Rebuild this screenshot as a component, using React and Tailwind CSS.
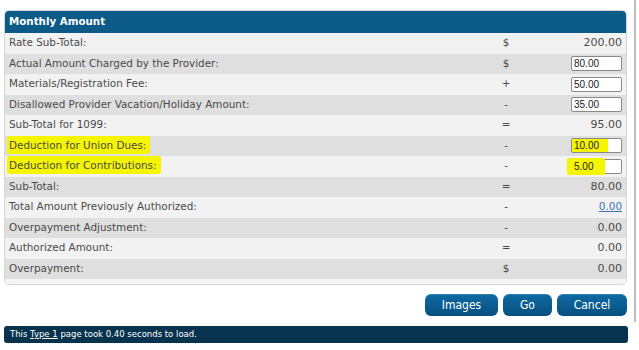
import React from "react";

const rows = [
  { label: "Rate Sub-Total:", sym: "$", val: "200.00" },
  { label: "Actual Amount Charged by the Provider:", sym: "$", input: "80.00" },
  { label: "Materials/Registration Fee:", sym: "+", input: "50.00" },
  { label: "Disallowed Provider Vacation/Holiday Amount:", sym: "-", input: "35.00" },
  { label: "Sub-Total for 1099:", sym: "=", val: "95.00" },
  { label: "Deduction for Union Dues:", sym: "-", input: "10.00", hl: 1 },
  { label: "Deduction for Contributions:", sym: "-", input: "5.00", hl: 2 },
  { label: "Sub-Total:", sym: "=", val: "80.00" },
  { label: "Total Amount Previously Authorized:", sym: "-", val: "0.00", link: true },
  { label: "Overpayment Adjustment:", sym: "-", val: "0.00" },
  { label: "Authorized Amount:", sym: "=", val: "0.00" },
  { label: "Overpayment:", sym: "$", val: "0.00" },
];

function Row({ r, i }) {
  const bg = i % 2 === 0 ? "bg-[#f2f2f2]" : "bg-[#dfdfdf]";
  return (
    <div className={`flex items-center h-[20.5px] ${bg}`}>
      <div className="flex-1 pl-[4px] relative">
        {r.hl ? (
          <span className="relative">
            <span className="absolute left-[-2px] top-[-3px] bottom-[-3px] right-[-4px] bg-[#f5f500] rounded-[2px]"></span>
            <span className="relative">{r.label}</span>
          </span>
        ) : (
          <span>{r.label}</span>
        )}
      </div>
      <div className="w-[40px] text-center mr-[40px]">{r.sym}</div>
      <div className="w-[60px] flex justify-end pr-[4px]">
        {r.input ? (
          <div className="relative w-[51px] h-[15px] border border-[#8a8a8a] rounded-[2px] bg-white flex items-center pl-[2px] text-[10px] text-[#222] font-['Liberation_Sans',sans-serif]">
            {r.hl === 1 && (
              <span className="absolute left-0 top-0 bottom-0 w-[36px] bg-[#f5f500]"></span>
            )}
            {r.hl === 2 && (
              <span className="absolute left-[-5px] top-[-2px] bottom-[-2px] w-[38px] bg-[#f5f500] rounded-[2px]"></span>
            )}
            <span className="relative">{r.input}</span>
          </div>
        ) : r.link ? (
          <span className="text-[#3a74b8] underline">{r.val}</span>
        ) : (
          <span className="text-[11px]">{r.val}</span>
        )}
      </div>
    </div>
  );
}

function Btn({ children, w }) {
  return (
    <div
      className={`${w} h-[22px] rounded-[6px] bg-gradient-to-b from-[#0d6aa3] to-[#08507f] text-white flex items-center justify-center text-[12px] font-['DejaVu_Sans_Condensed','DejaVu_Sans',sans-serif] shadow-[inset_0_1px_0_rgba(255,255,255,0.15)]`}
    >
      {children}
    </div>
  );
}

export default function App() {
  return (
    <div className="w-[639px] h-[350px] bg-white font-['DejaVu_Sans',Verdana,sans-serif] text-[10.4px] text-[#4a4a4a] relative">
      <div className="w-[636px] h-[322px] border-r-2 border-[#bdbdbd] pt-[10px] pl-[4px] pr-[7px]">
        <div className="rounded-[5px] border border-[#d6d6d6] overflow-hidden bg-[#f2f2f2]">
          <div className="h-[22px] bg-[#0b5a88] text-white font-bold text-[10.3px] flex items-center pl-[4px]">
            Monthly Amount
          </div>
          {rows.map((r, i) => (
            <Row r={r} i={i} key={i} />
          ))}
          <div className="h-[5px] bg-[#f5f5f5]"></div>
        </div>
        <div className="flex justify-end gap-[5px] mt-[9px]">
          <Btn w="w-[73px]">Images</Btn>
          <Btn w="w-[49px]">Go</Btn>
          <Btn w="w-[70px]">Cancel</Btn>
        </div>
      </div>
      <div className="mx-[4px] w-[624px] mt-[4px] h-[17px] rounded-[3px] bg-[#07334f] text-white text-[8.5px] flex items-center pl-[6px]">
        This&nbsp;<span className="underline">Type 1</span>&nbsp;page took 0.40 seconds to load.
      </div>
    </div>
  );
}
